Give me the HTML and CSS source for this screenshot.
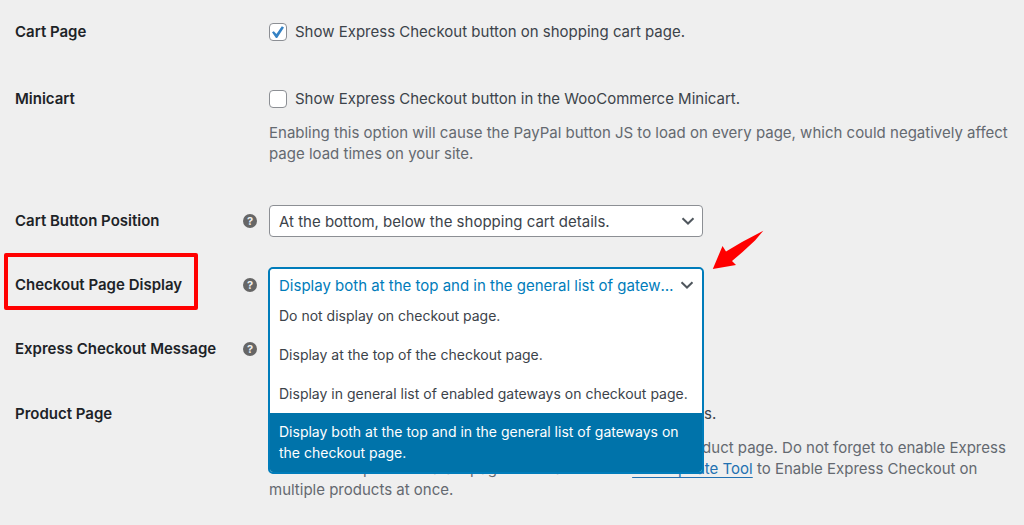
FILE: index.html
```html
<!DOCTYPE html>
<html lang="en">
<head>
<meta charset="utf-8">
<title>Express Checkout settings</title>
<link rel="stylesheet" href="styles.css">
</head>
<body>
<form class="settings">
  <div class="row">
    <div class="name"><span>Cart Page</span></div>
    <div class="field">
      <label class="check"><input type="checkbox" checked>Show Express Checkout button on shopping cart page.</label>
    </div>
  </div>
  <div class="row">
    <div class="name"><span>Minicart</span></div>
    <div class="field">
      <label class="check"><input type="checkbox">Show Express Checkout button in the WooCommerce Minicart.</label>
      <p class="help">Enabling this option will cause the PayPal button JS to load on every page, which could negatively affect<br>page load times on your site.</p>
    </div>
  </div>
  <div class="row row-control">
    <div class="name"><label for="position">Cart Button Position</label><span class="tip">?</span></div>
    <div class="field">
      <div class="picker">
        <select id="position" class="select"><option>At the bottom, below the shopping cart details.</option></select>
        <svg class="chevron" viewBox="0 0 14 8"><path d="M1.500 1.200l5.500 5.300 5.500-5.300"/></svg>
      </div>
    </div>
  </div>
  <div class="row row-control">
    <div class="name"><label for="display">Checkout Page Display</label><span class="tip">?</span><span class="highlight"></span></div>
    <div class="field">
      <div class="picker">
        <div class="dropdown">
          <select id="display" class="select select-open"><option>Display both at the top and in the general list of gateways on the checkout page.</option></select>
          <svg class="chevron" viewBox="0 0 14 8"><path d="M1.500 1.200l5.500 5.300 5.500-5.300"/></svg>
          <ul class="options" role="listbox" aria-label="Checkout Page Display">
            <li role="option">Do not display on checkout page.</li>
            <li role="option">Display at the top of the checkout page.</li>
            <li role="option">Display in general list of enabled gateways on checkout page.</li>
            <li role="option" class="selected" aria-selected="true">Display both at the top and in the general list of gateways on the checkout page.</li>
          </ul>
        </div>
        <svg class="arrow" viewBox="0 0 52 40"><path d="M51.300 .8L43 10.500 30 22.500 20 31 24 35 .8 39 10.500 16 14 21.500 30 12z"/></svg>
      </div>
    </div>
  </div>
  <div class="row row-control">
    <div class="name"><span>Express Checkout Message</span><span class="tip">?</span></div>
    <div class="field"></div>
  </div>
  <div class="row row-last">
    <div class="name"><span>Product Page</span></div>
    <div class="field">
      <label class="check"><input type="checkbox">Show Express Checkout button on separate product pages.</label>
      <p class="help">Express Checkout button may be displayed on the simple product page. Do not forget to enable Express<br>Checkout on product data's page. You can use the <a href="#">Bulk Update Tool</a> to Enable Express Checkout on<br>multiple products at once.</p>
    </div>
  </div>
</form>
</body>
</html>
```
FILE: styles.css
```css
* { box-sizing: border-box; }
body {
  margin: 0;
  background: #efefef;
  color: #3c434a;
  font: 15px/22px Inter, "Liberation Sans", sans-serif;
}
.row {
  display: grid;
  grid-template-columns: 242px 1fr;
  column-gap: 12px;
  padding: 21px 0 24px 15px;
}
.row-control { padding-top: 17px; padding-bottom: 15px; }
.row-last { padding-top: 23px; }
.name {
  position: relative;
  display: flex;
  align-items: center;
  justify-content: space-between;
  height: 22px;
  color: #1d2327;
  font-weight: 600;
}
.row-control .name { height: 32px; }
.tip {
  width: 14px;
  height: 14px;
  border-radius: 50%;
  background: #666;
  color: #efefef;
  font-size: 11px;
  line-height: 14px;
  font-weight: 700;
  text-align: center;
}
.highlight {
  position: absolute;
  top: -16px;
  left: -11px;
  width: 194px;
  height: 57px;
  border: 4px solid #f00;
  border-radius: 2px;
}
.check { display: flex; align-items: center; gap: 8px; }
.check input {
  appearance: none;
  display: grid;
  place-items: center;
  width: 18px;
  height: 18px;
  margin: 0;
  border: 1px solid #8c8f94;
  border-radius: 4px;
  background: #fff;
}
.check input:checked::before {
  content: "";
  width: 12px;
  height: 12px;
  background: #3582c4;
  clip-path: polygon(0 53%, 15% 43%, 37% 67%, 82% 3%, 100% 12%, 43% 100%, 33% 100%);
}
.help { margin: 12px 0 0; color: #646970; line-height: 21px; white-space: nowrap; }
.help a { color: #2271b1; text-underline-offset: 3px; }
.picker { position: relative; width: 434px; height: 32px; }
.select {
  appearance: none;
  display: block;
  width: 100%;
  height: 32px;
  padding: 1px 26px 0 9px;
  border: 1px solid #8c8f94;
  border-radius: 4px;
  background: #fff;
  color: #3c434a;
  font: inherit;
  text-overflow: ellipsis;
}
.select-open { border: 0; color: #007cba; }
.chevron {
  position: absolute;
  right: 8px;
  top: 12px;
  width: 14px;
  height: 8px;
  fill: none;
  stroke: #50575e;
  stroke-width: 2;
}
.dropdown {
  position: absolute;
  z-index: 1;
  top: -2px;
  left: -1px;
  right: -1px;
  border: 2px solid #007cba;
  border-radius: 5px;
  background: #fff;
  overflow: hidden;
}
.options {
  margin: 0;
  padding: 0;
  list-style: none;
  font-size: 14px;
  line-height: 21px;
}
.options li { padding: 9px; }
.options li:first-child { padding-top: 4px; }
.options .selected { padding-top: 8px; background: #0073aa; color: #fff; }
.arrow {
  position: absolute;
  left: 443px;
  top: -39px;
  width: 52px;
  height: 40px;
  fill: #f00;
}
```
